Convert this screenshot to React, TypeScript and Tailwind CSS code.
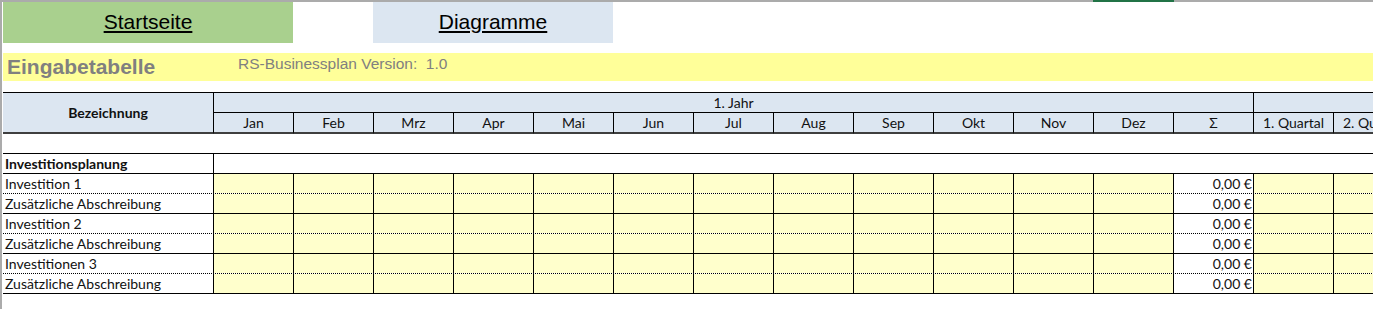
import React from 'react';

const months = ['Jan', 'Feb', 'Mrz', 'Apr', 'Mai', 'Jun', 'Jul', 'Aug', 'Sep', 'Okt', 'Nov', 'Dez'];
const quarters = ['1. Quartal', '2. Quartal', '3. Quartal', '4. Quartal'];

const rows = [
  { label: 'Investition 1', dotted: true },
  { label: 'Zusätzliche Abschreibung', dotted: false },
  { label: 'Investition 2', dotted: true },
  { label: 'Zusätzliche Abschreibung', dotted: false },
  { label: 'Investitionen 3', dotted: true },
  { label: 'Zusätzliche Abschreibung', dotted: false },
];

const cellFont = "font-['Lato','Liberation_Sans',sans-serif] text-[14px]";

export default function App() {
  return (
    <div className="w-[1373px] h-[309px] overflow-hidden bg-white flex flex-col">
      {/* excel column header edge */}
      <div className="h-[2px] shrink-0 flex bg-[#ababab]">
        <div className="w-[1093px] shrink-0" />
        <div className="w-[81px] shrink-0 bg-[#217346]" />
      </div>

      <div className="flex flex-1">
        {/* row header edge */}
        <div className="w-[2px] shrink-0 bg-[#ababab]" />

        <div className="pl-[1px] flex flex-col">
          {/* nav buttons */}
          <div className="h-[41px] flex font-['Liberation_Sans',Arial,sans-serif] text-[21px] text-black">
            <div className="w-[290px] bg-[#a9d08e] flex items-center justify-center pb-[2px]">
              <span className="underline underline-offset-[2px]">Startseite</span>
            </div>
            <div className="w-[80px]" />
            <div className="w-[240px] bg-[#dce6f1] flex items-center justify-center pb-[2px]">
              <span className="underline underline-offset-[2px]">Diagramme</span>
            </div>
          </div>

          <div className="h-[10px]" />

          {/* title band */}
          <div className="h-[28px] w-[1370px] bg-[#ffff99] flex font-['Liberation_Sans',Arial,sans-serif] text-[#808080]">
            <div className="w-[235px] pl-[4px] flex items-center text-[21px] font-bold">Eingabetabelle</div>
            <div className="pt-[2px] text-[15.5px] leading-[18px] whitespace-pre">RS-Businessplan Version:  1.0</div>
          </div>

          <div className="h-[11px]" />

          {/* table header */}
          <div className={`grid grid-cols-[211px_repeat(17,80px)] grid-rows-[20px_21px] border-t border-black bg-[#dce6f1] text-[#111] ${cellFont}`}>
            <div className="row-span-2 border-r border-black border-b-2 border-b-[#3f3f3f] flex items-center justify-center font-bold">
              Bezeichnung
            </div>
            <div className="col-span-13 border-r border-b border-black flex items-center justify-center leading-none">
              1. Jahr
            </div>
            <div className="col-span-4 border-r border-b border-black" />
            {[...months, 'Σ', ...quarters].map((m) => (
              <div
                key={m}
                className="border-r border-black border-b-2 border-b-[#3f3f3f] flex items-center justify-center leading-none whitespace-nowrap overflow-hidden"
              >
                {m}
              </div>
            ))}
          </div>

          {/* body */}
          <div className={`text-[#111] ${cellFont}`}>
            <div className="h-[20px] border-b border-black" />
            <div className="h-[20px] border-b border-black flex">
              <div className="w-[211px] border-r border-black pl-[2px] flex items-end font-bold leading-[18px]">
                Investitionsplanung
              </div>
            </div>
            {rows.map((r, i) => {
              const bottom = r.dotted ? 'border-b border-dotted border-black' : 'border-b border-solid border-black';
              return (
                <div key={i} className={`h-[20px] flex ${bottom}`}>
                  <div className="w-[211px] shrink-0 border-r border-solid border-black pl-[2px] flex items-end leading-[18px] whitespace-nowrap">
                    {r.label}
                  </div>
                  {months.map((m) => (
                    <div key={m} className="w-[80px] shrink-0 border-r border-solid border-black bg-[#ffffcc]" />
                  ))}
                  <div className="w-[80px] shrink-0 border-r border-solid border-black bg-white flex items-end justify-end pr-[1px] leading-[18px]">
                    0,00 €
                  </div>
                  {quarters.map((q) => (
                    <div key={q} className="w-[80px] shrink-0 border-r border-solid border-black bg-[#ffffcc]" />
                  ))}
                </div>
              );
            })}
          </div>
        </div>
      </div>
    </div>
  );
}
